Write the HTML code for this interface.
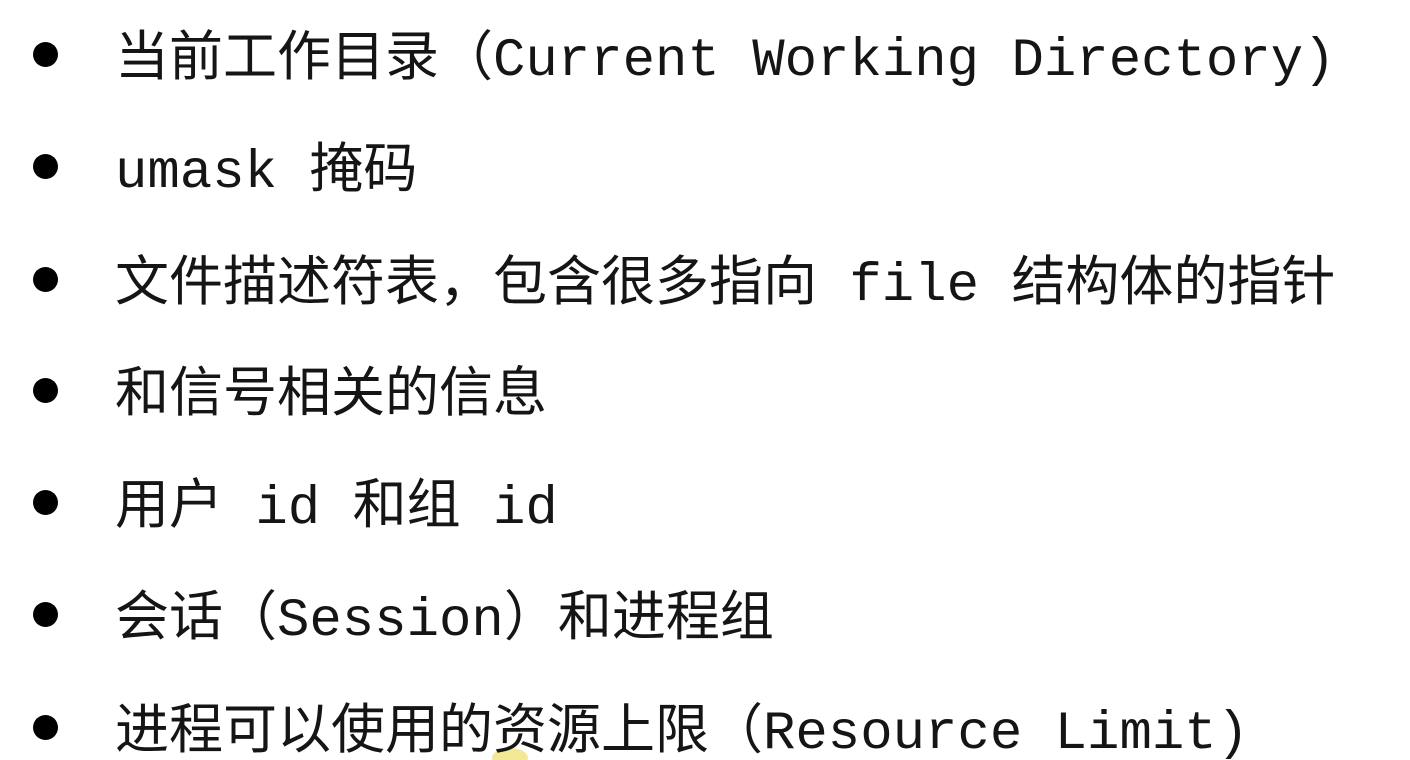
<!DOCTYPE html>
<html><head><meta charset="utf-8"><style>
html,body{margin:0;padding:0;background:#fff;width:1410px;height:760px;overflow:hidden;position:relative}
.l{position:absolute;left:115px;height:60px;line-height:60px;font-size:54px;color:#151515;white-space:pre;font-family:"Liberation Mono","Noto Sans CJK SC",monospace}
.c{font-family:"Noto Sans CJK SC","WenQuanYi Zen Hei",sans-serif}
.b{position:absolute;left:33px;width:25px;height:25px;border-radius:50%;background:#000}
.y{position:absolute;left:492px;top:748px;width:36px;height:20px;border-radius:50%;background:#f3e27a;opacity:.8}
</style></head><body>
<div class="y"></div>
<div class="b" style="top:42px"></div>
<div class="l" style="top:22px"><span class="c">当前工作目录（</span>Current Working Directory)</div>
<div class="b" style="top:154px"></div>
<div class="l" style="top:134px">umask <span class="c">掩码</span></div>
<div class="b" style="top:267px"></div>
<div class="l" style="top:247px"><span class="c">文件描述符表，包含很多指向</span> file <span class="c">结构体的指针</span></div>
<div class="b" style="top:378px"></div>
<div class="l" style="top:358px"><span class="c">和信号相关的信息</span></div>
<div class="b" style="top:490px"></div>
<div class="l" style="top:470px"><span class="c">用户</span> id <span class="c">和组</span> id</div>
<div class="b" style="top:602px"></div>
<div class="l" style="top:582px"><span class="c">会话（</span>Session<span class="c">）和进程组</span></div>
<div class="b" style="top:715px"></div>
<div class="l" style="top:695px"><span class="c">进程可以使用的资源上限（</span>Resource Limit)</div>
</body></html>
